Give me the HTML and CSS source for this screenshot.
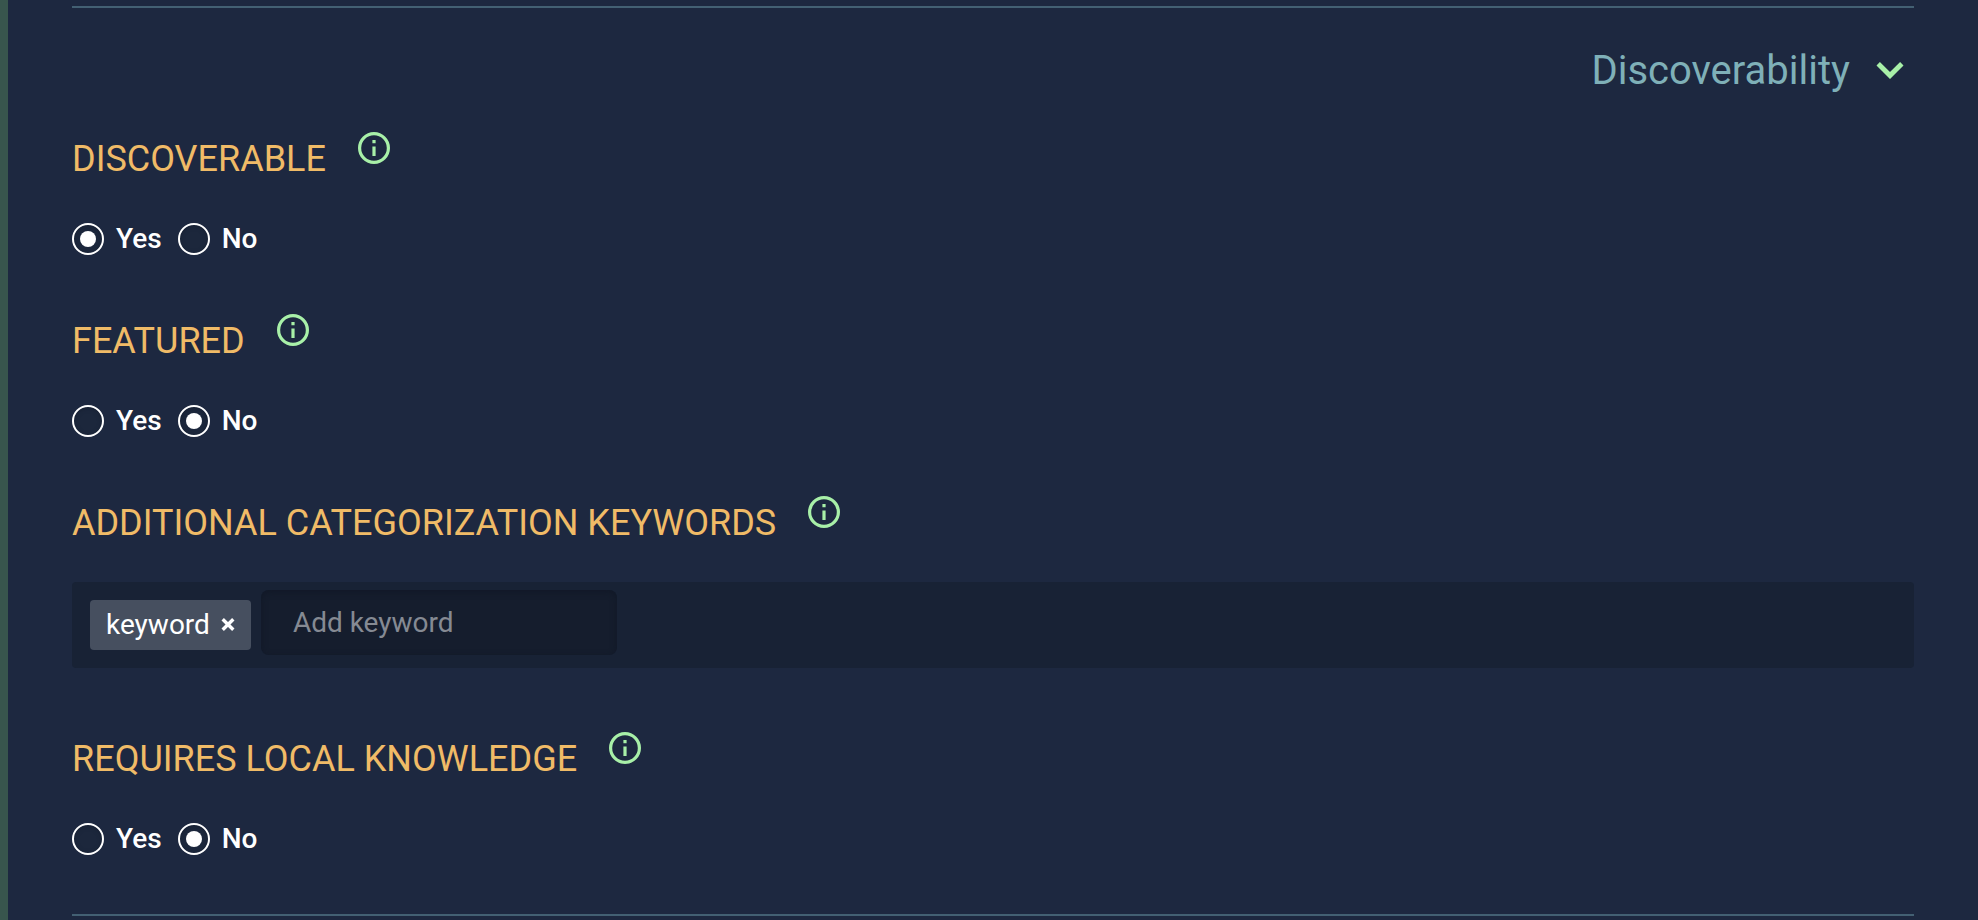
FILE: index.html
```html
<!DOCTYPE html>
<html lang="en">
<head>
<meta charset="utf-8">
<meta name="viewport" content="width=device-width, initial-scale=1">
<title>Discoverability</title>
<link rel="stylesheet" href="styles.css">
</head>
<body>
<svg class="sprite" aria-hidden="true">
  <symbol id="info" viewBox="0 0 32 32">
    <circle cx="16" cy="16" r="14.4" fill="none" stroke="currentColor" stroke-width="3.2"/>
    <path d="M14.4 8h3.2v3.2h-3.2zM14.4 14.4h3.2V24h-3.2z" fill="currentColor"/>
  </symbol>
</svg>
<main class="page">
  <form class="section">
    <h2 class="section-title">
      <button class="section-toggle" type="button" aria-expanded="true">
        Discoverability
        <svg class="chevron" viewBox="0 0 28 18" aria-hidden="true"><path d="M3.9 0 0.5 3.4 14 17 27.5 3.4 24.1 0 14 9.9z" fill="currentColor"/></svg>
      </button>
    </h2>

    <fieldset class="group">
      <legend class="group-head">
        <span class="group-row"><span class="group-label">DISCOVERABLE</span>
        <button class="info" type="button" aria-label="About discoverable"><svg class="info-icon"><use href="#info"/></svg></button></span>
      </legend>
      <div class="options">
        <label class="option"><input class="radio" type="radio" name="discoverable" checked>Yes</label>
        <label class="option"><input class="radio" type="radio" name="discoverable">No</label>
      </div>
    </fieldset>

    <fieldset class="group">
      <legend class="group-head">
        <span class="group-row"><span class="group-label">FEATURED</span>
        <button class="info" type="button" aria-label="About featured"><svg class="info-icon"><use href="#info"/></svg></button></span>
      </legend>
      <div class="options">
        <label class="option"><input class="radio" type="radio" name="featured">Yes</label>
        <label class="option"><input class="radio" type="radio" name="featured" checked>No</label>
      </div>
    </fieldset>

    <div class="group">
      <div class="group-head">
        <div class="group-row"><label class="group-label" for="keyword">ADDITIONAL CATEGORIZATION KEYWORDS</label>
        <button class="info" type="button" aria-label="About keywords"><svg class="info-icon"><use href="#info"/></svg></button></div>
      </div>
      <div class="keywords">
        <span class="tag">keyword<button class="tag-remove" type="button" aria-label="Remove keyword"><svg class="tag-cross" viewBox="0 0 14 14" aria-hidden="true"><path d="M1.7 1.2l10.6 10.6M12.3 1.2L1.7 11.8" stroke="currentColor" stroke-width="3.4"/></svg></button></span>
        <input class="keyword-input" id="keyword" type="text" placeholder="Add keyword">
      </div>
    </div>

    <fieldset class="group">
      <legend class="group-head">
        <span class="group-row"><span class="group-label">REQUIRES LOCAL KNOWLEDGE</span>
        <button class="info" type="button" aria-label="About local knowledge"><svg class="info-icon"><use href="#info"/></svg></button></span>
      </legend>
      <div class="options">
        <label class="option"><input class="radio" type="radio" name="local">Yes</label>
        <label class="option"><input class="radio" type="radio" name="local" checked>No</label>
      </div>
    </fieldset>
  </form>
</main>
</body>
</html>
```

FILE: styles.css
```css
* {
  box-sizing: border-box;
}

body {
  margin: 0;
  background: #1d2840;
  color: #fff;
  font-family: Roboto, sans-serif;
  font-size: 28px;
}

button {
  padding: 0;
  border: 0;
  background: none;
  font: inherit;
  cursor: pointer;
}

.sprite {
  position: absolute;
  width: 0;
  height: 0;
}

.page {
  min-height: 100vh;
  padding: 6px 64px 4px;
  border-left: 8px solid #38554d;
}

.section {
  border-top: 2px solid #436073;
  border-bottom: 2px solid #436073;
}

.section-title {
  display: flex;
  justify-content: flex-end;
  margin: 0;
  padding: 39px 10px 37px;
  font-weight: 400;
}

.section-toggle {
  display: flex;
  align-items: center;
  gap: 26px;
  color: #7fb0b8;
  font-size: 40px;
  line-height: 48px;
}

.chevron {
  width: 28px;
  height: 18px;
  color: #a8f0a8;
}

.group {
  min-width: 0;
  margin: 0 0 54px;
  padding: 0;
  border: 0;
}

.group-head {
  padding: 0;
  margin-bottom: 38px;
}

.group-row {
  display: flex;
  align-items: flex-start;
  gap: 32px;
}

.group-label {
  padding-top: 6px;
  color: #f0bb67;
  font-size: 36px;
  line-height: 42px;
}

.info {
  display: flex;
  color: #a8f0a8;
}

.info-icon {
  width: 32px;
  height: 32px;
}

.options {
  display: flex;
  gap: 16px;
  padding: 5px 0;
}

.option {
  display: flex;
  align-items: center;
  gap: 12px;
  font-weight: 500;
  line-height: 32px;
}

.radio {
  appearance: none;
  display: grid;
  place-items: center;
  width: 32px;
  height: 32px;
  margin: 0;
  border: 2px solid #fff;
  border-radius: 50%;
  background: #1c273c;
  box-shadow: inset 0 1px 4px #172033;
}

.radio:checked::before {
  content: "";
  width: 16px;
  height: 16px;
  border-radius: 50%;
  background: #fff;
}

.keywords {
  display: flex;
  align-items: flex-start;
  gap: 10px;
  margin-bottom: 64px;
  padding: 8px 18px 13px;
  border-radius: 4px;
  background: #182235;
}

.tag {
  display: flex;
  align-items: center;
  gap: 11px;
  margin-top: 10px;
  padding: 0 16px;
  border-radius: 4px;
  background: #464f5f;
  line-height: 50px;
}

.tag-remove {
  display: flex;
  color: #fff;
}

.tag-cross {
  width: 14px;
  height: 14px;
}

.keyword-input {
  width: 356px;
  height: 65px;
  padding: 0 32px;
  border: 0;
  border-radius: 8px;
  background: #151d2d;
  box-shadow: inset 0 2px 6px #111827;
  color: #fff;
  font: inherit;
}

.keyword-input::placeholder {
  color: #858a93;
  opacity: 1;
}
```
